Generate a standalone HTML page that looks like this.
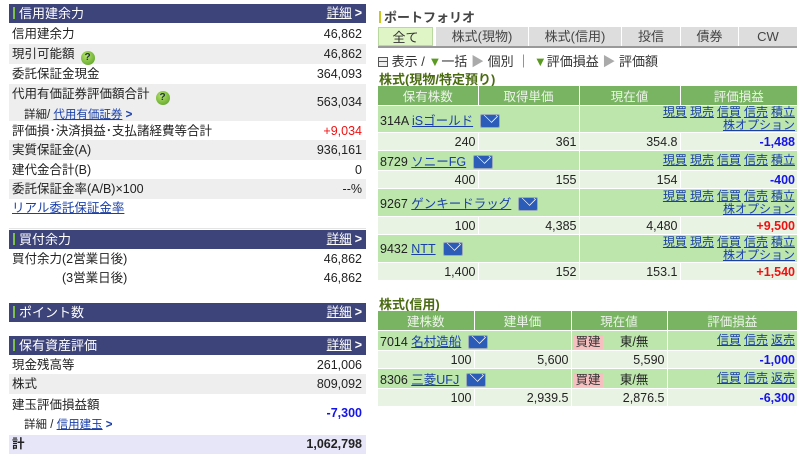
<!DOCTYPE html>
<html><head><meta charset="utf-8"><style>
*{margin:0;padding:0;box-sizing:border-box}
body{width:800px;height:459px;background:#fff;font-family:"Liberation Sans","Noto Sans CJK JP",sans-serif;font-size:12.5px;color:#222;position:relative;overflow:hidden}
.a{position:absolute}
.hd{position:absolute;left:9px;width:357px;height:19px;background:#3d4479;color:#fff;font-size:13px;line-height:19px;padding-left:4px}
.hd b{display:inline-block;width:2px;height:12px;background:#7cc04a;vertical-align:-1px;margin-right:4px}
.hd span{position:absolute;right:4px;top:0;color:#fff;text-decoration:underline;font-size:12.5px}
.hd span i{font-style:normal;text-decoration:none;display:inline-block;margin-left:3px;font-weight:bold}
.r{position:absolute;left:9px;width:357px;height:20px;line-height:20px;padding:0 4px 0 3px;white-space:nowrap}
.r.g{background:#eeeeee}
.r .v{position:absolute;right:4px;top:0}
.q{display:inline-block;width:14px;height:14px;border-radius:7px;background:radial-gradient(circle at 40% 35%,#b6e36a,#4f9a1f);color:#234;font-size:10px;font-weight:bold;text-align:center;line-height:14px;vertical-align:-2px;margin-left:6px}
a{color:#1a3fa8;text-decoration:underline}
.sm{font-size:11.5px}
table{border-collapse:collapse;table-layout:fixed;position:absolute}
td{padding:0 2px;font-size:12.5px;border-right:1px solid #fff;border-bottom:1px solid #fff;white-space:nowrap}
td:last-child{border-right:none}
tr.h td{background:#78b462;color:#eef4ea;text-align:center;height:19px}
tr.n td{background:#bde6ad;vertical-align:middle}
tr.v td{background:#e9f3e4;text-align:right;height:18px}
.lk{text-align:right;line-height:13px;font-size:12px}
.lk a{margin-left:3px}
.env{display:inline-block;width:20px;height:14px;background:#2a5cb8;border-radius:2px;vertical-align:-3px;margin-left:7px;position:relative;overflow:hidden;border:1px solid #9ab}
.env:before{content:"";position:absolute;left:2px;top:-7px;width:13px;height:13px;border:1px solid #fff;transform:rotate(45deg) scale(.8,.6)}
.neg{color:#1414e8;font-weight:bold}
.pos{color:#f01010;font-weight:bold}
.tag{background:#f6c0c0;color:#333;padding:0 2px}
.tab{position:absolute;top:27px;height:19px;background:#ddd;text-align:center;line-height:19px;color:#444;font-size:13px}
.st{position:absolute;left:379px;color:#4b6b12;font-weight:bold;font-size:13px}
</style></head><body>

<div class="hd" style="top:4px"><b></b>信用建余力<span>詳細<i>&gt;</i></span></div>
<div class="r" style="top:24px">信用建余力<span class="v">46,862</span></div>
<div class="r g" style="top:44px">現引可能額<span class="q">?</span><span class="v">46,862</span></div>
<div class="r" style="top:64px">委託保証金現金<span class="v">364,093</span></div>
<div class="r g" style="top:84px;height:37px;line-height:18px;padding-top:1px">代用有価証券評価額合計<span class="q">?</span><br><span class="sm" style="padding-left:12px">詳細/ <a>代用有価証券</a> <b style="color:#1a3fa8">&gt;</b></span><span class="v" style="top:9px">563,034</span></div>
<div class="r" style="top:121px">評価損･決済損益･支払諸経費等合計<span class="v" style="color:#f01010">+9,034</span></div>
<div class="r g" style="top:140px">実質保証金(A)<span class="v">936,161</span></div>
<div class="r" style="top:160px">建代金合計(B)<span class="v">0</span></div>
<div class="r g" style="top:179px">委託保証金率(A/B)×100<span class="v">--%</span></div>
<div class="r" style="top:198px"><a>リアル委託保証金率</a></div>
<div class="a" style="left:9px;top:228px;width:357px;height:1px;background:#e4e4e4"></div>

<div class="hd" style="top:230px"><b></b>買付余力<span>詳細<i>&gt;</i></span></div>
<div class="r" style="top:249px">買付余力(2営業日後)<span class="v">46,862</span></div>
<div class="r" style="top:268px"><span style="padding-left:50px">(3営業日後)</span><span class="v">46,862</span></div>

<div class="hd" style="top:303px"><b></b>ポイント数<span>詳細<i>&gt;</i></span></div>
<div class="hd" style="top:336px"><b></b>保有資産評価<span>詳細<i>&gt;</i></span></div>
<div class="r" style="top:355px">現金残高等<span class="v">261,006</span></div>
<div class="r g" style="top:374px">株式<span class="v">809,092</span></div>
<div class="r" style="top:394px;height:41px;line-height:19px;padding-top:2px">建玉評価損益額<br><span class="sm" style="padding-left:12px">詳細 / <a>信用建玉</a> <b style="color:#1a3fa8">&gt;</b></span><span class="v neg" style="top:10px">-7,300</span></div>
<div class="r" style="top:435px;height:19px;line-height:19px;background:#e6e6f8;font-weight:bold">計<span class="v">1,062,798</span></div>

<!-- right -->
<div class="a" style="left:379px;top:7px;font-size:13px;color:#444;font-weight:bold"><span style="display:inline-block;width:2px;height:12px;background:#c8c820;vertical-align:-1px;margin-right:3px"></span>ポートフォリオ</div>
<div class="tab" style="left:378px;width:55px;background:#dff5c6;border:1px solid #b8d8a0;color:#333">全て</div>
<div class="tab" style="left:436px;width:92px">株式(現物)</div>
<div class="tab" style="left:529px;width:92px">株式(信用)</div>
<div class="tab" style="left:622px;width:58px">投信</div>
<div class="tab" style="left:681px;width:57px">債券</div>
<div class="tab" style="left:739px;width:58px">CW</div>
<div class="a" style="left:378px;top:46px;width:419px;height:2px;background:#999"></div>
<div class="a" style="left:378px;top:51px;font-size:13px;color:#333;white-space:nowrap"><span style="display:inline-block;width:10px;height:10px;border:1px solid #555;background:linear-gradient(#555 0 0) 0 3px/100% 1px no-repeat,#eee;vertical-align:-1px"></span> 表示 / <span style="color:#5a9a20">▼</span>一括 <span style="color:#aaa">▶</span> 個別 ｜ <span style="color:#5a9a20">▼</span>評価損益 <span style="color:#aaa">▶</span> 評価額</div>
<div class="st" style="top:69px">株式(現物/特定預り)</div>

<table style="left:378px;top:86px;width:419px">
<colgroup><col style="width:100px"><col style="width:101px"><col style="width:101px"><col style="width:117px"></colgroup>
<tr class="h"><td>保有株数</td><td>取得単価</td><td>現在値</td><td>評価損益</td></tr>
<tr class="n"><td colspan="2" style="height:27px">314A <a>iSゴールド</a><span class="env"></span></td><td colspan="2" class="lk"><a>現買</a><a>現売</a><a>信買</a><a>信売</a><a>積立</a><br><a>株オプション</a></td></tr>
<tr class="v"><td>240</td><td>361</td><td>354.8</td><td class="neg">-1,488</td></tr>
<tr class="n"><td colspan="2" style="height:19px">8729 <a>ソニーFG</a><span class="env"></span></td><td colspan="2" class="lk"><a>現買</a><a>現売</a><a>信買</a><a>信売</a><a>積立</a></td></tr>
<tr class="v"><td>400</td><td>155</td><td>154</td><td class="neg">-400</td></tr>
<tr class="n"><td colspan="2" style="height:28px">9267 <a>ゲンキードラッグ</a><span class="env"></span></td><td colspan="2" class="lk"><a>現買</a><a>現売</a><a>信買</a><a>信売</a><a>積立</a><br><a>株オプション</a></td></tr>
<tr class="v"><td>100</td><td>4,385</td><td>4,480</td><td class="pos">+9,500</td></tr>
<tr class="n"><td colspan="2" style="height:28px">9432 <a>NTT</a><span class="env"></span></td><td colspan="2" class="lk"><a>現買</a><a>現売</a><a>信買</a><a>信売</a><a>積立</a><br><a>株オプション</a></td></tr>
<tr class="v"><td>1,400</td><td>152</td><td>153.1</td><td class="pos">+1,540</td></tr>
</table>

<div class="st" style="top:294px">株式(信用)</div>
<table style="left:378px;top:311px;width:419px">
<colgroup><col style="width:96px"><col style="width:97px"><col style="width:96px"><col style="width:130px"></colgroup>
<tr class="h"><td>建株数</td><td>建単価</td><td>現在値</td><td>評価損益</td></tr>
<tr class="n"><td colspan="2" style="height:19px">7014 <a>名村造船</a><span class="env"></span></td><td style="height:19px"><span class="tag">買建</span>&nbsp;&nbsp;&nbsp;&nbsp;&nbsp;東/無</td><td class="lk"><a>信買</a><a>信売</a><a>返売</a></td></tr>
<tr class="v"><td>100</td><td>5,600</td><td>5,590</td><td class="neg">-1,000</td></tr>
<tr class="n"><td colspan="2" style="height:19px">8306 <a>三菱UFJ</a><span class="env"></span></td><td><span class="tag">買建</span>&nbsp;&nbsp;&nbsp;&nbsp;&nbsp;東/無</td><td class="lk"><a>信買</a><a>信売</a><a>返売</a></td></tr>
<tr class="v"><td>100</td><td>2,939.5</td><td>2,876.5</td><td class="neg">-6,300</td></tr>
</table>
</body></html>
